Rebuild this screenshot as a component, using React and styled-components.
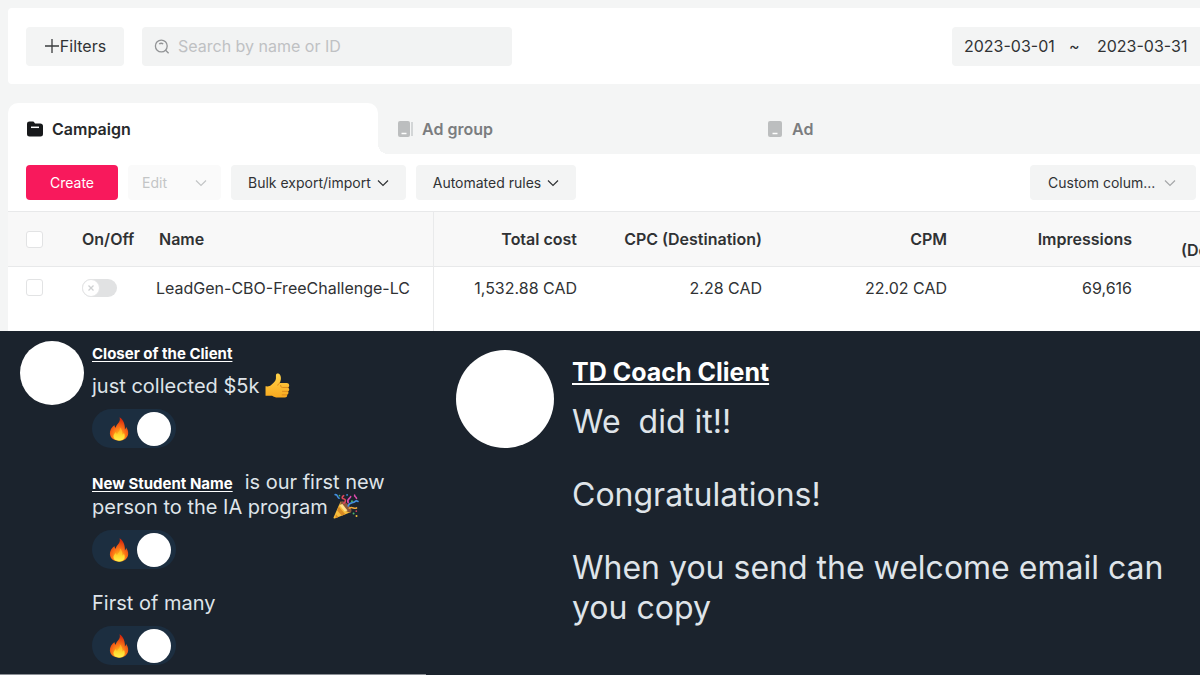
import React from 'react';
import styled, { createGlobalStyle } from 'styled-components';

const columns = [
  { title: 'Total cost', value: '1,532.88 CAD' },
  { title: 'CPC (Destination)', value: '2.28 CAD' },
  { title: 'CPM', value: '22.02 CAD' },
  { title: 'Impressions', value: '69,616' },
];

const Chevron = () => (
  <ChevronSvg viewBox='0 0 12 12' aria-hidden='true'>
    <path d='M1 3.5 6 8.5 11 3.5' />
  </ChevronSvg>
);

const Fire = () => (
  <EmojiSvg viewBox='0 0 24 24' $size={24} role='img' aria-label='fire'>
    <defs>
      <radialGradient id='flame' cx='50%' cy='82%' r='75%'>
        <stop offset='0.2' stopColor='#ffb219' />
        <stop offset='0.5' stopColor='#fc7417' />
        <stop offset='1' stopColor='#d5280c' />
      </radialGradient>
      <linearGradient id='flameCore' x1='0' y1='0' x2='0' y2='1'>
        <stop offset='0' stopColor='#ff9d1c' />
        <stop offset='0.6' stopColor='#ffd92e' />
        <stop offset='1' stopColor='#fff04f' />
      </linearGradient>
    </defs>
    <path
      fill='url(#flame)'
      d='M12.6.3c.8 3-.2 4.700-2 6.800-.9 1-1.700 2.200-1.800 3.700C7.900 10 7.400 9 7.500 7.900 4.700 10 2.600 13.100 2.900 16.600 3.200 21 7 23.700 12 23.700s9-2.800 9.200-7.400c.1-2.400-.8-4.700-2.200-6.500.1 1.200-.3 2-1.100 2.600.3-4.600-1.400-9.500-5.300-12.100Z'
    />
    <path
      fill='url(#flameCore)'
      d='M12.700 10.200c.5 2.300-.2 3.500-1.600 5-.5.5-.8 1.100-.9 1.700-.8-.4-1.200-1-1.200-1.900-1.600 1.200-2.700 2.900-2.500 4.800.2 2.300 2.500 3.600 5.500 3.600s5.500-1.500 5.700-4c.1-1.500-.3-2.700-1-3.600-.1.900-.5 1.500-1.200 1.800.2-3-.7-5.900-2.800-7.400Z'
    />
  </EmojiSvg>
);

const ThumbsUp = () => (
  <EmojiSvg viewBox='0 0 24 24' $size={25} role='img' aria-label='thumbs up'>
    <defs>
      <linearGradient id='skin' x1='0' y1='0' x2='0' y2='1'>
        <stop offset='0' stopColor='#ffd34a' />
        <stop offset='1' stopColor='#f9a91e' />
      </linearGradient>
    </defs>
    <path
      fill='url(#skin)'
      d='M.5 12.700c2.800.5 4.300-.3 5.700-1.500 2.200-1.900 4.200-3.600 4.300-5.900V2.200c0-1.400 1-2 2.100-1.800 2.200.4 3 3.500 2.600 5.900-.2 1.300-.7 2.400-1.100 3.400h6.700c2.800 0 3.200 3.600 1.300 4.200 1.700.8 1.500 3.200-.1 3.700 1 1 .6 3-.9 3.300.6 1.500-.4 2.700-2 2.700h-6.600c-2.700 0-4-.9-5.700-1.800H.5Z'
    />
    <path
      fill='none'
      stroke='#db861b'
      strokeWidth='0.9'
      strokeLinecap='round'
      d='M22 13.900h-5c-1.500 0-2-.8-2-2M22 17.600h-5.200M21 21h-4.500M14.100 9.700c-.8.4-1.500 1-1.800 2'
    />
  </EmojiSvg>
);

const PartyPopper = () => (
  <EmojiSvg viewBox='0 0 24 24' $size={26} role='img' aria-label='party popper'>
    <path fill='#f7bd3c' d='M7 7.800 16.800 17.600 1.500 23.600c-.7.2-1.200-.3-1-1Z' />
    <path fill='#d98a24' d='m5.300 12.500 6 7.200-3.100 1.200-4.300-4.800Zm-2.700 7 2.400 2.700-2.700 1Z' />
    <ellipse cx='11.9' cy='12.700' rx='2.900' ry='6.700' transform='rotate(-45 11.900 12.700)' fill='#8b5638' />
    <path fill='#ffe08a' d='m8.500 10 4.900 6.200-2.600.9-4.500-5.600Z' />
    <g fill='none' strokeWidth='1.5' strokeLinecap='round'>
      <path stroke='#e0465b' d='M10 9.500c2.800-1.900 1.200-4-.4-4.200-1.500-.2-1.500-2 .2-2.800' />
      <path stroke='#428fe0' d='M14 12c1-3.800 4.400-2.300 6.200-4.100.8-.8 2-.7 2.800-.1M2 1.500c2.600-.2 1.900 2.700 3.600 3.300' />
      <path stroke='#dc4bab' d='M14 9c-1.800-3.500 2.200-3.800 2.300-5.700M20 2c-.7 1.600 2 1.400 1.700 3' />
      <path stroke='#f1a83b' d='M15 14c3-2 4.200 1.200 6.700-.2' />
    </g>
    <g fill='#4fb66b'>
      <circle cx='19' cy='19' r='.9' />
      <circle cx='17.500' cy='7.600' r='.9' />
      <circle cx='6' cy='2.400' r='.8' />
    </g>
    <circle cx='21.500' cy='16.700' r='.8' fill='#e0465b' />
    <circle cx='21.700' cy='21.300' r='.9' fill='#f1c23b' />
    <circle cx='13' cy='1.800' r='.8' fill='#428fe0' />
  </EmojiSvg>
);

const FireReaction = () => (
  <Reaction type='button' aria-label='Fire reaction'>
    <Fire />
    <Avatar as='span' $size={34} />
  </Reaction>
);

const App = () => {
  return (
    <Page>
      <GlobalStyle />
      <Manager>
        <FilterBar>
          <FilterButton type='button'>
            <svg width='16' height='16' viewBox='0 0 16 16' aria-hidden='true'>
              <path d='M8 1v14M1 8h14' stroke='#3a3c3e' strokeWidth='1.300' />
            </svg>
            Filters
          </FilterButton>
          <SearchBox>
            <svg width='16' height='16' viewBox='0 0 16 16' fill='none' stroke='#929496' aria-hidden='true'>
              <circle cx='7.300' cy='8' r='5.900' strokeWidth='1.300' />
              <path d='m11.600 12.300 3 3M5.200 6.100c1.200-1 2.800-1 4 0' strokeWidth='1.300' />
            </svg>
            <input type='search' aria-label='Search' placeholder='Search by name or ID' />
          </SearchBox>
          <DateRange>
            <input type='text' aria-label='Start date' defaultValue='2023-03-01' />
            <span>~</span>
            <input type='text' aria-label='End date' defaultValue='2023-03-31' />
          </DateRange>
        </FilterBar>

        <Tabs role='tablist'>
          <Tab type='button' role='tab' aria-selected='true' $active>
            <svg width='18' height='18' viewBox='0 0 18 18' aria-hidden='true'>
              <path
                fill='#17191b'
                d='M1 4c0-1.700 1-2.500 2.500-2.500h3c1 0 1.500.4 2 1.200l.5.8h5.200C16 3.500 17 4.500 17 6v8c0 1.700-1 2.500-2.500 2.500h-11C2 16.500 1 15.700 1 14Z'
              />
              <path d='M5 7.300h8' stroke='#fff' strokeWidth='1.500' />
            </svg>
            Campaign
          </Tab>
          <Tab type='button' role='tab' aria-selected='false'>
            <svg width='18' height='18' viewBox='0 0 18 18' aria-hidden='true'>
              <rect x='2' y='1' width='12' height='16' rx='2' fill='#bcbebf' />
              <path d='M5.500 13.500h5' stroke='#fff' strokeWidth='1.500' />
              <path d='M16 2v14' stroke='#c9cbcc' strokeWidth='1.500' />
            </svg>
            Ad group
          </Tab>
          <Tab type='button' role='tab' aria-selected='false'>
            <svg width='18' height='18' viewBox='0 0 18 18' aria-hidden='true'>
              <rect x='2' y='1' width='14' height='16' rx='2' fill='#bcbebf' />
              <path d='M6.500 13.500h5' stroke='#fff' strokeWidth='1.500' />
            </svg>
            Ad
          </Tab>
        </Tabs>

        <Toolbar>
          <ToolButton type='button' $primary>
            Create
          </ToolButton>
          <ToolButton type='button' $gap={28} disabled>
            Edit
            <Chevron />
          </ToolButton>
          <ToolButton type='button'>
            Bulk export/import
            <Chevron />
          </ToolButton>
          <ToolButton type='button'>
            Automated rules
            <Chevron />
          </ToolButton>
          <ColumnSelect>
            <select aria-label='Columns'>
              <option>Custom colum...</option>
            </select>
            <Chevron />
          </ColumnSelect>
        </Toolbar>

        <TableWrap>
          <Table>
            <colgroup>
              <col style={{ width: 56 }} />
              <col style={{ width: 76 }} />
              <col style={{ width: 294 }} />
              <col style={{ width: 161 }} />
              <col style={{ width: 185 }} />
              <col style={{ width: 185 }} />
              <col style={{ width: 185 }} />
              <col />
            </colgroup>
            <thead>
              <tr>
                <HeadCell>
                  <Checkbox type='checkbox' aria-label='Select all' />
                </HeadCell>
                <HeadCell>On/Off</HeadCell>
                <HeadCell $pinned>Name</HeadCell>
                {columns.map(column => (
                  <HeadCell key={column.title} $numeric>
                    {column.title}
                  </HeadCell>
                ))}
                <HeadCell $cut>
                  <br />
                  (De
                </HeadCell>
              </tr>
            </thead>
            <tbody>
              <tr>
                <Cell>
                  <Checkbox type='checkbox' aria-label='Select campaign' />
                </Cell>
                <Cell>
                  <Switch>
                    <input type='checkbox' role='switch' aria-label='Campaign on or off' />
                    <svg width='18' height='18' viewBox='0 0 18 18' aria-hidden='true'>
                      <circle cx='9' cy='9' r='8.500' fill='#fff' stroke='#e3e4e5' />
                      <path d='m6.500 6.500 5 5m0-5-5 5' stroke='#cfd1d2' strokeWidth='1.300' />
                    </svg>
                  </Switch>
                </Cell>
                <Cell $pinned>LeadGen-CBO-FreeChallenge-LC</Cell>
                {columns.map(column => (
                  <Cell key={column.title} $numeric>
                    {column.value}
                  </Cell>
                ))}
                <Cell />
              </tr>
            </tbody>
          </Table>
        </TableWrap>
      </Manager>

      <Chats>
        <Feed>
          <Avatar $size={64} />
          <Messages>
            <Message>
              <Name href='#closer'>Closer of the Client</Name>
              <p>
                just collected $5k <ThumbsUp />
              </p>
              <FireReaction />
            </Message>
            <Message>
              <p>
                <Name href='#student' $inline>
                  New Student Name
                </Name>
                is our first new
                <br />
                person to the IA program <PartyPopper />
              </p>
              <FireReaction />
            </Message>
            <Message>
              <p>First of many</p>
              <FireReaction />
            </Message>
          </Messages>
        </Feed>
        <Conversation>
          <Avatar $size={98} />
          <LargeMessage>
            <Name href='#coach' $large>
              TD Coach Client
            </Name>
            <LargeText>
              <p>We&nbsp; did it!!</p>
              <p>Congratulations!</p>
              <p>
                When you send the welcome email can
                <br />
                you copy
              </p>
            </LargeText>
          </LargeMessage>
        </Conversation>
      </Chats>
    </Page>
  );
};

export default App;

const GlobalStyle = createGlobalStyle`
  * {
    box-sizing: border-box;
  }

  body {
    margin: 0;
    background: #1b232d;
    font-family: Inter, sans-serif;
  }

  button, input, select {
    margin: 0;
    padding: 0;
    border: 0;
    font: inherit;
    color: inherit;
  }

  p {
    margin: 0;
  }
`;

const Page = styled.main`
  display: flex;
  flex-direction: column;
  min-height: 100vh;
  overflow: hidden;
`;

const Manager = styled.section`
  padding: 8px 0 0 8px;
  background: #f4f5f5;
  color: #303234;
  font-size: 16px;
`;

const FilterBar = styled.div`
  display: flex;
  align-items: center;
  gap: 18px;
  height: 76px;
  padding-left: 18px;
  background: #fff;
  border-radius: 4px 0 0 4px;
`;

const FilterButton = styled.button`
  display: flex;
  align-items: center;
  justify-content: center;
  width: 98px;
  height: 39px;
  border-radius: 4px;
  background: #f3f4f4;
`;

const SearchBox = styled.label`
  display: flex;
  align-items: center;
  gap: 8px;
  width: 370px;
  height: 39px;
  padding: 0 12px;
  border-radius: 4px;
  background: #f2f3f3;

  input {
    flex: 1;
    background: none;
    outline: none;
  }

  input::placeholder {
    color: #bfc1c3;
  }
`;

const DateRange = styled.div`
  display: flex;
  align-items: center;
  gap: 12px;
  height: 39px;
  margin-left: auto;
  padding: 0 10px 0 12px;
  border-radius: 4px 0 0 4px;
  background: #f3f4f4;

  input {
    width: 93px;
    background: none;
  }

  span {
    width: 16px;
  }
`;

const Tabs = styled.div`
  display: flex;
  margin-top: 19px;
`;

const Tab = styled.button`
  position: relative;
  display: flex;
  align-items: center;
  gap: 8px;
  width: 370px;
  height: 51px;
  padding-left: 18px;
  border-radius: 10px 10px 0 0;
  background: ${props => (props.$active ? '#fff' : 'transparent')};
  color: ${props => (props.$active ? '#27292b' : '#7b7d7f')};
  font-weight: 600;

  /* curved foot on the right of the active tab */
  &::after {
    content: '';
    display: ${props => (props.$active ? 'block' : 'none')};
    position: absolute;
    left: 100%;
    bottom: 0;
    width: 10px;
    height: 10px;
    background: radial-gradient(circle at 100% 0, transparent 10px, #fff 10px);
  }
`;

const Toolbar = styled.div`
  display: flex;
  align-items: center;
  gap: 10px;
  height: 57px;
  padding: 0 4px 0 18px;
  background: #fff;
  font-size: 14px;
`;

const ToolButton = styled.button`
  display: flex;
  align-items: center;
  justify-content: center;
  gap: ${props => props.$gap || 6}px;
  height: 35px;
  padding: 0 ${props => (props.$primary ? 24 : 17)}px;
  border-radius: 4px;
  background: ${props => (props.$primary ? '#f8195c' : '#f3f4f4')};
  color: ${props => (props.$primary ? '#fff' : '#303234')};

  &:disabled {
    padding: 0 14px;
    background: #fafafa;
    color: #c3c5c6;
  }
`;

const ChevronSvg = styled.svg`
  width: 12px;
  height: 12px;
  fill: none;
  stroke: currentColor;
  stroke-width: 1.2;
`;

const ColumnSelect = styled.label`
  display: flex;
  align-items: center;
  justify-content: space-between;
  width: 166px;
  height: 35px;
  margin-left: auto;
  padding: 0 20px 0 18px;
  border-radius: 4px;
  background: #f3f4f4;

  select {
    appearance: none;
    background: none;
  }

  svg {
    color: #a5a7a9;
  }
`;

const TableWrap = styled.div`
  overflow: hidden;
`;

const Table = styled.table`
  width: 100%;
  table-layout: fixed;
  border-collapse: separate;
  border-spacing: 0;
  background: #fff;
`;

const HeadCell = styled.th`
  height: 56px;
  padding: 0 ${props => (props.$cut ? 0 : 18)}px;
  padding-left: ${props => (props.$pinned ? 19 : props.$cut ? 31 : 18)}px;
  border-top: 1px solid #e8e9ea;
  border-bottom: 1px solid #e8e9ea;
  border-right: ${props => (props.$pinned ? '1px solid #e9eaeb' : '0')};
  background: #f8f8f8;
  font-weight: 600;
  line-height: 22px;
  text-align: ${props => (props.$numeric ? 'right' : 'left')};
  white-space: nowrap;
`;

const Cell = styled.td`
  height: 64px;
  padding: 10px 18px 0;
  padding-left: ${props => (props.$pinned ? 16 : 18)}px;
  border-right: ${props => (props.$pinned ? '1px solid #e9eaeb' : '0')};
  line-height: 22px;
  text-align: ${props => (props.$numeric ? 'right' : 'left')};
  vertical-align: top;
  white-space: nowrap;
`;

const Checkbox = styled.input`
  appearance: none;
  display: block;
  width: 17px;
  height: 17px;
  margin: 2px 0;
  border: 1px solid #e2e3e4;
  border-radius: 3px;
  background: #fff;
`;

const Switch = styled.label`
  display: flex;
  align-items: center;
  width: 35px;
  height: 18px;
  margin: 2px 0;
  border-radius: 9px;
  background: #e1e2e3;

  input {
    appearance: none;
    width: 0;
    height: 0;
  }
`;

const Chats = styled.section`
  display: grid;
  grid-template-columns: 426px 1fr;
  flex: 1;
  background: #1b232d;
  color: #dfe4e9;
`;

const Feed = styled.div`
  display: flex;
  align-items: flex-start;
  gap: 8px;
  padding: 10px 0 8px 20px;
  border-bottom: 1px solid #8b8f95;
`;

const Avatar = styled.div`
  flex: none;
  width: ${props => props.$size}px;
  height: ${props => props.$size}px;
  border-radius: 50%;
  background: #fff;
`;

const Messages = styled.div`
  display: flex;
  flex-direction: column;
  gap: 22px;
  padding-top: 3px;
`;

const Message = styled.article`
  display: flex;
  flex-direction: column;
  align-items: flex-start;
  gap: 10px;
  font-size: 20px;
  line-height: 25px;
  white-space: nowrap;
`;

const Name = styled.a`
  margin-right: ${props => (props.$inline ? 12 : 0)}px;
  color: #fff;
  font-size: ${props => (props.$large ? 25 : 15)}px;
  font-weight: 700;
  line-height: 20px;
  text-decoration: underline;
  text-underline-offset: 2px;
`;

const Reaction = styled.button`
  display: flex;
  align-items: center;
  gap: 6px;
  height: 39px;
  padding: 0 5px 0 15px;
  border-radius: 20px;
  background: #1c2e40;
`;

const EmojiSvg = styled.svg`
  width: ${props => props.$size}px;
  height: ${props => props.$size}px;
  margin: -4px 0;
  vertical-align: -1px;
`;

const Conversation = styled.div`
  display: flex;
  align-items: flex-start;
  gap: 18px;
  padding: 19px 20px 0 30px;
`;

const LargeMessage = styled.article`
  display: flex;
  flex-direction: column;
  align-items: flex-start;
  gap: 20px;
  padding-top: 12px;
`;

const LargeText = styled.div`
  display: flex;
  flex-direction: column;
  gap: 33px;
  font-size: 32px;
  line-height: 40px;
`;
